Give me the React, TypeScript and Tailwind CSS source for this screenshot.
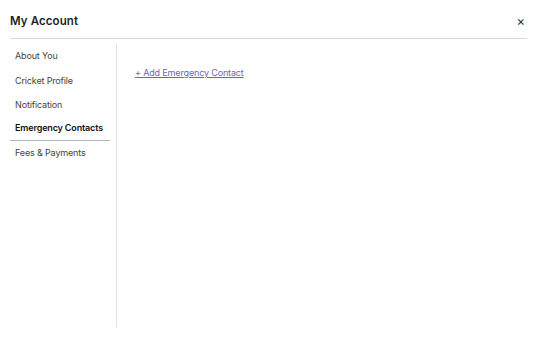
import { useState } from "react";

const menuItems = ["About You", "Cricket Profile", "Notification", "Emergency Contacts", "Fees & Payments"];

export default function App() {
  const [active, setActive] = useState("Emergency Contacts");

  return (
    <div className="w-[540px] h-[346px] bg-white font-['Inter',sans-serif] text-[#1f1f1f]">
      {/* Header */}
      <div className="mx-[10px] w-[517px] h-[39px] flex items-center justify-between border-b border-[#d9d9d9]">
        <h1 className="text-[11.5px] font-semibold tracking-[0.1px] mt-[5px]">My Account</h1>
        <button className="text-[13px] leading-none mr-[2px] mt-[4px] text-[#333]">×</button>
      </div>

      <div className="flex pl-[10px] pt-[5px]">
        {/* Sidebar */}
        <div className="w-[107px] h-[283px] border-r border-[#e2e2e2]">
          {menuItems.map((item) => (
            <button
              key={item}
              onClick={() => setActive(item)}
              className={`block w-[100px] whitespace-nowrap text-left pl-[5px] h-[24.2px] text-[9px] tracking-[-0.15px] ${
                active === item
                  ? "font-semibold text-[#111] border-b border-[#a9b4c6]"
                  : "text-[#444]"
              }`}
            >
              {item}
            </button>
          ))}
        </div>

        {/* Content */}
        <div className="pl-[18px] pt-[14px]">
          <a href="#" className="text-[9px] tracking-[-0.15px] text-[#6f64b8] underline">
            + Add Emergency Contact
          </a>
        </div>
      </div>
    </div>
  );
}
